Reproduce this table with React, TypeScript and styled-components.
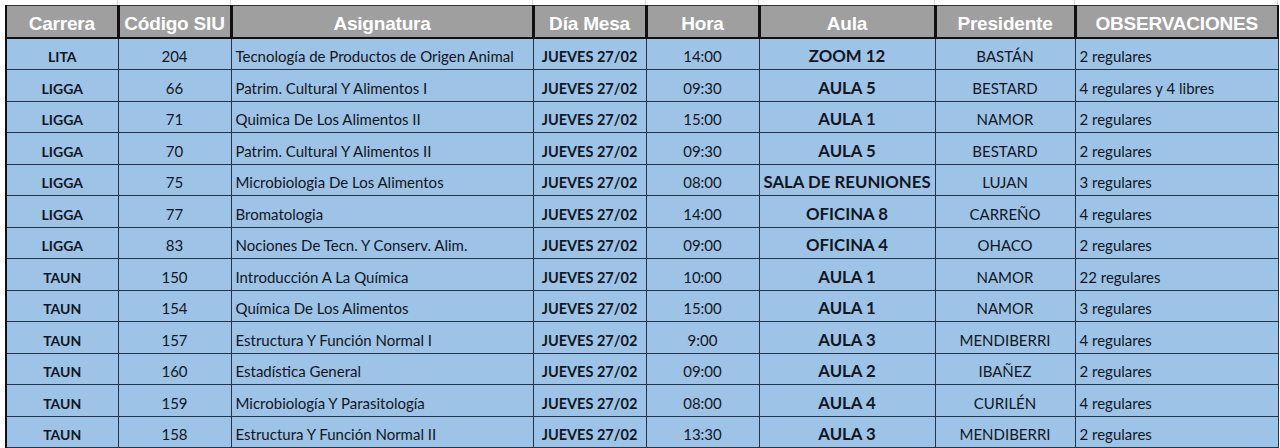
import React from "react";
import styled, { createGlobalStyle } from "styled-components";

const GlobalStyle = createGlobalStyle`
  html, body { margin: 0; padding: 0; background: #ffffff; }
  body { font-family: Lato, "Noto Sans", sans-serif; }
`;

const COLS = [112, 113, 302, 113, 113, 176, 140, 203];

const Sheet = styled.div`
  width: 1280px;
  height: 448px;
  overflow: hidden;
  background: #ffffff;
  display: flex;
  flex-direction: column;
  padding-left: 5px;
  box-sizing: border-box;
`;

const GridStrip = styled.div`
  display: grid;
  grid-template-columns: ${COLS.map((c) => `${c}px`).join(" ")};
  height: 5px;
  margin-left: 1px;
`;

const GridCell = styled.div`
  border-right: 1px solid #d9d9d9;
`;

const Table = styled.table`
  border-collapse: collapse;
  table-layout: fixed;
  width: 1273px;
  border-left: 2px solid #111;
`;

const HeadCell = styled.th`
  background: #9f9f9f;
  color: #ffffff;
  font-family: "Liberation Sans", Arial, sans-serif;
  font-weight: bold;
  font-size: 19px;
  height: 29px;
  padding: 0 2px 2px;
  vertical-align: bottom;
  text-align: center;
  white-space: nowrap;
  border-left: 3px solid #111;
  border-top: 1px solid #333;
  border-bottom: 2px solid #111;
  letter-spacing: -0.2px;
  &:first-child { border-left: none; }
  &:last-child { border-right: 2px solid #111; }
`;

const Row = styled.tr`
  height: 31.5px;
`;

const Cell = styled.td<{ $align?: "left" | "center"; $bold?: boolean; $size?: number; $pb?: number }>`
  background: #9dc3e6;
  color: #111722;
  font-family: Lato, "Noto Sans", sans-serif;
  font-size: ${(p) => p.$size ?? 15}px;
  font-weight: ${(p) => (p.$bold ? 700 : 400)};
  text-align: ${(p) => p.$align ?? "center"};
  vertical-align: bottom;
  padding: 0 4px ${(p) => p.$pb ?? 4}px;
  white-space: nowrap;
  overflow: hidden;
  border: 1px solid #25344d;
  border-top: 1.5px solid #25344d;
  &:first-child { border-left: none; }
`;

type R = [string, string, string, string, string, string, string];

const rows: R[] = [
  ["LITA", "204", "Tecnología de Productos de Origen Animal", "14:00", "ZOOM 12", "BASTÁN", "2 regulares"],
  ["LIGGA", "66", "Patrim. Cultural Y Alimentos I", "09:30", "AULA 5", "BESTARD", "4 regulares y 4 libres"],
  ["LIGGA", "71", "Quimica De Los Alimentos II", "15:00", "AULA 1", "NAMOR", "2 regulares"],
  ["LIGGA", "70", "Patrim. Cultural Y Alimentos II", "09:30", "AULA 5", "BESTARD", "2 regulares"],
  ["LIGGA", "75", "Microbiologia De Los Alimentos", "08:00", "SALA DE REUNIONES", "LUJAN", "3 regulares"],
  ["LIGGA", "77", "Bromatologia", "14:00", "OFICINA 8", "CARREÑO", "4 regulares"],
  ["LIGGA", "83", "Nociones De Tecn. Y Conserv. Alim.", "09:00", "OFICINA 4", "OHACO", "2 regulares"],
  ["TAUN", "150", "Introducción A La Química", "10:00", "AULA 1", "NAMOR", "22 regulares"],
  ["TAUN", "154", "Química De Los Alimentos", "15:00", "AULA 1", "NAMOR", "3 regulares"],
  ["TAUN", "157", "Estructura Y Función Normal I", "9:00", "AULA 3", "MENDIBERRI", "4 regulares"],
  ["TAUN", "160", "Estadística General", "09:00", "AULA 2", "IBAÑEZ", "2 regulares"],
  ["TAUN", "159", "Microbiología Y Parasitología", "08:00", "AULA 4", "CURILÉN", "4 regulares"],
  ["TAUN", "158", "Estructura Y Función Normal II", "13:30", "AULA 3", "MENDIBERRI", "2 regulares"],
];

const headers = ["Carrera", "Código SIU", "Asignatura", "Día Mesa", "Hora", "Aula", "Presidente", "OBSERVACIONES"];

export default function App() {
  return (
    <Sheet>
      <GlobalStyle />
      <GridStrip>
        {COLS.map((_, i) => (
          <GridCell key={i} />
        ))}
      </GridStrip>
      <Table>
        <colgroup>
          {COLS.map((w, i) => (
            <col key={i} style={{ width: w }} />
          ))}
        </colgroup>
        <thead>
          <tr>
            {headers.map((h) => (
              <HeadCell key={h}>{h}</HeadCell>
            ))}
          </tr>
        </thead>
        <tbody>
          {rows.map((r, i) => (
            <Row key={i}>
              <Cell $bold $size={14}>{r[0]}</Cell>
              <Cell>{r[1]}</Cell>
              <Cell $align="left">{r[2]}</Cell>
              <Cell $bold $size={14.5}>JUEVES 27/02</Cell>
              <Cell>{r[3]}</Cell>
              <Cell $bold $size={16.8} $pb={3}>{r[4]}</Cell>
              <Cell>{r[5]}</Cell>
              <Cell $align="left">{r[6]}</Cell>
            </Row>
          ))}
        </tbody>
      </Table>
    </Sheet>
  );
}
